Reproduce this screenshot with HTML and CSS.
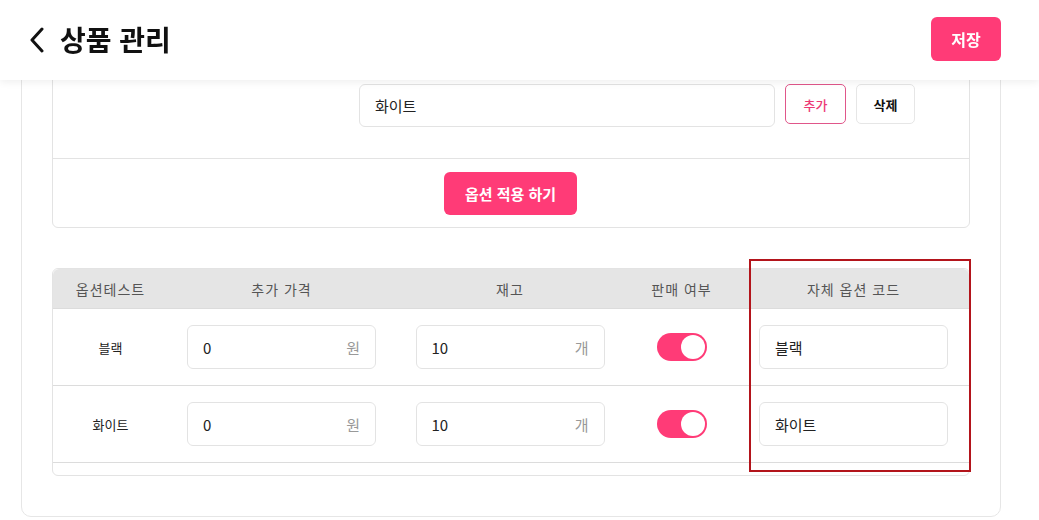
FILE: index.html
```html
<!DOCTYPE html>
<html lang="ko">
<head>
<meta charset="utf-8">
<title>상품 관리</title>
<link rel="stylesheet" href="styles.css">
</head>
<body>
<header class="topbar">
  <div class="topbar-left">
    <svg class="back-icon" width="18" height="26" viewBox="0 0 18 26" aria-hidden="true">
      <path d="M14 2 L4 13 L14 24" fill="none" stroke="#111" stroke-width="3" stroke-linecap="round" stroke-linejoin="round"/>
    </svg>
    <h1 class="title">상품 관리</h1>
  </div>
  <button class="btn-save">저장</button>
</header>

<main class="page">
  <section class="panel">
    <div class="option-card">
      <div class="option-row">
        <div class="text-input option-input">화이트</div>
        <button class="btn-add">추가</button>
        <button class="btn-del">삭제</button>
      </div>
      <div class="apply-row">
        <button class="btn-apply">옵션 적용 하기</button>
      </div>
    </div>

    <div class="table-wrap">
      <div class="opt-table">
        <div class="th">옵션테스트</div>
        <div class="th">추가 가격</div>
        <div class="th">재고</div>
        <div class="th">판매 여부</div>
        <div class="th">자체 옵션 코드</div>

        <div class="td label">블랙</div>
        <div class="td"><div class="text-input unit-input"><span>0</span><span class="unit">원</span></div></div>
        <div class="td"><div class="text-input unit-input"><span>10</span><span class="unit">개</span></div></div>
        <div class="td"><span class="toggle"><span class="knob"></span></span></div>
        <div class="td"><div class="text-input code-input">블랙</div></div>

        <div class="td label">화이트</div>
        <div class="td"><div class="text-input unit-input"><span>0</span><span class="unit">원</span></div></div>
        <div class="td"><div class="text-input unit-input"><span>10</span><span class="unit">개</span></div></div>
        <div class="td"><span class="toggle"><span class="knob"></span></span></div>
        <div class="td"><div class="text-input code-input">화이트</div></div>
      </div>
      <div class="table-foot"></div>
      <div class="highlight"></div>
    </div>
  </section>
</main>
</body>
</html>
```

FILE: styles.css
```css
* { box-sizing: border-box; }

html, body {
  margin: 0;
  padding: 0;
  background: #fff;
  font-family: "Noto Sans CJK KR", "Noto Sans", sans-serif;
  color: #222;
  overflow: hidden;
}

button {
  font-family: inherit;
  cursor: pointer;
}

.topbar {
  position: fixed;
  top: 0;
  left: 0;
  right: 0;
  height: 80px;
  background: #fff;
  display: flex;
  align-items: center;
  justify-content: space-between;
  padding: 0 38px 0 28px;
  box-shadow: 0 2px 8px rgba(0, 0, 0, 0.07);
  z-index: 10;
}

.topbar-left {
  display: flex;
  align-items: center;
  gap: 14px;
}

.back-icon { display: block; }

.title {
  margin: 0;
  font-size: 28px;
  font-weight: 700;
  color: #111;
  line-height: 1;
  margin-top: -2px;
}

.btn-save {
  width: 70px;
  height: 44px;
  border: none;
  border-radius: 6px;
  background: #ff3b77;
  color: #fff;
  font-size: 16px;
  font-weight: 700;
  margin-top: -2px;
}

.page {
  padding: 40px 38px 0 21px;
}

.panel {
  border: 1px solid #e6e6e6;
  border-radius: 10px;
  padding: 30px 30px 40px;
}

.option-card {
  border: 1px solid #e3e3e3;
  border-radius: 6px;
}

.option-row {
  display: flex;
  align-items: flex-start;
  gap: 10px;
  padding: 12px 0 31px 306px;
  border-bottom: 1px solid #e3e3e3;
}

.text-input {
  border: 1px solid #e3e3e3;
  border-radius: 6px;
  background: #fff;
  display: flex;
  align-items: center;
  padding: 0 15px;
  font-size: 15px;
  color: #222;
}

.option-input {
  width: 416px;
  height: 43px;
}

.btn-add, .btn-del {
  height: 40px;
  border-radius: 5px;
  background: #fff;
  font-size: 13px;
  font-weight: 500;
}

.btn-add {
  width: 61px;
  border: 1px solid #e0568a;
  color: #ec3a75;
}

.btn-del {
  width: 59px;
  border: 1px solid #e6e6e6;
  color: #111;
  font-weight: 700;
}

.apply-row {
  display: flex;
  justify-content: center;
  padding: 13px 0 12px;
}

.btn-apply {
  width: 133px;
  height: 43px;
  border: none;
  border-radius: 6px;
  background: #ff3b77;
  color: #fff;
  font-size: 15px;
  font-weight: 700;
  margin-left: -1px;
}

.table-wrap {
  position: relative;
  margin-top: 40px;
  border: 1px solid #e3e3e3;
  border-radius: 6px;
}

.opt-table {
  display: grid;
  grid-template-columns: 115px 227px 230px 113px 231px;
  border-radius: 6px 6px 0 0;
  overflow: hidden;
}

.th {
  height: 40px;
  background: #e5e5e5;
  display: flex;
  align-items: center;
  justify-content: center;
  font-size: 14px;
  color: #555;
  letter-spacing: 1px;
  border-bottom: 1px solid #dcdcdc;
}

.td {
  height: 77px;
  display: flex;
  align-items: center;
  justify-content: center;
  border-bottom: 1px solid #dcdcdc;
}

.td.label {
  font-size: 13px;
  color: #222;
}

.unit-input, .code-input {
  width: 189px;
  height: 44px;
}

.unit-input {
  justify-content: space-between;
}

.unit {
  color: #999;
  font-size: 15px;
}

.toggle {
  width: 50px;
  height: 28px;
  border-radius: 14px;
  background: #ff3b77;
  display: flex;
  align-items: center;
  justify-content: flex-end;
  padding: 2px;
}

.knob {
  width: 24px;
  height: 24px;
  border-radius: 50%;
  background: #fff;
}

.table-foot {
  height: 12px;
}

.highlight {
  position: absolute;
  top: -10px;
  left: 696px;
  width: 222px;
  height: 213px;
  border: 2px solid #b3141b;
  pointer-events: none;
}
```
